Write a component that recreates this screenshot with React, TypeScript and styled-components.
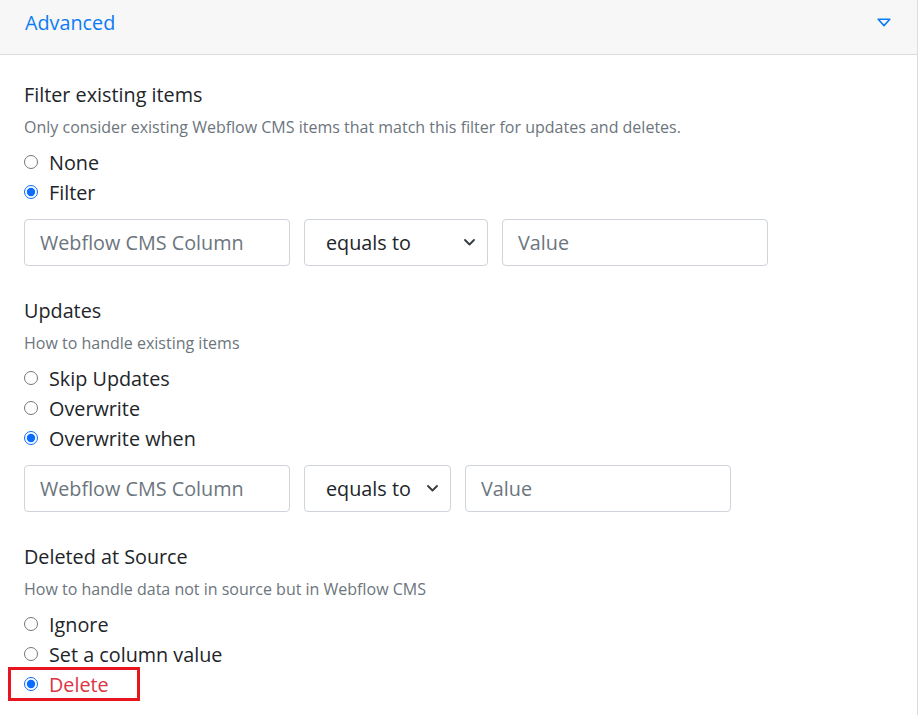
import { FunctionComponent } from 'react';
import { createGlobalStyle, styled } from 'styled-components';

const GlobalStyle = createGlobalStyle`
  body {
    margin: 0;
    background: #fff;
    font-family: 'Open Sans', 'Noto Sans', sans-serif;
    color: #212529;
  }
`;

interface Option {
  label: string;
  checked?: boolean;
  danger?: boolean;
  highlight?: boolean;
}

interface SectionProps {
  name: string;
  title: string;
  description: string;
  options: Option[];
  selectWidth?: number;
}

const Chevron = () => (
  <svg width="11" height="7" viewBox="0 0 11 7" fill="none">
    <path d="M1 1l4.5 4.5L10 1" stroke="#343a40" strokeWidth="1.8" strokeLinecap="round" strokeLinejoin="round" />
  </svg>
);

const Triangle = () => (
  <svg width="14" height="9" viewBox="0 0 14 9" fill="none">
    <path d="M1.2 1.2h11.6L7 7.6z" stroke="#0d7cf2" strokeWidth="1.6" strokeLinejoin="round" />
  </svg>
);

const Section: FunctionComponent<SectionProps> = ({ name, title, description, options, selectWidth }) => (
  <SectionBox>
    <SectionTitle>{title}</SectionTitle>
    <Description>{description}</Description>
    <RadioList>
      {options.map((option) => (
        <RadioRow key={option.label} $highlight={option.highlight}>
          <Radio type="radio" name={name} defaultChecked={option.checked} />
          <RadioLabel $danger={option.danger}>{option.label}</RadioLabel>
        </RadioRow>
      ))}
    </RadioList>
    {selectWidth && (
      <FilterRow>
        <TextInput placeholder="Webflow CMS Column" />
        <SelectWrap $width={selectWidth}>
          <Select defaultValue="equals">
            <option value="equals">equals to</option>
          </Select>
          <SelectIcon>
            <Chevron />
          </SelectIcon>
        </SelectWrap>
        <TextInput placeholder="Value" />
      </FilterRow>
    )}
  </SectionBox>
);

const App = () => (
  <>
    <GlobalStyle />
    <Panel>
      <Header>
        <HeaderTitle>Advanced</HeaderTitle>
        <Triangle />
      </Header>
      <Body>
        <Section
          name="filter"
          title="Filter existing items"
          description="Only consider existing Webflow CMS items that match this filter for updates and deletes."
          options={[{ label: 'None' }, { label: 'Filter', checked: true }]}
          selectWidth={184}
        />
        <Section
          name="updates"
          title="Updates"
          description="How to handle existing items"
          options={[
            { label: 'Skip Updates' },
            { label: 'Overwrite' },
            { label: 'Overwrite when', checked: true },
          ]}
          selectWidth={147}
        />
        <Section
          name="deleted"
          title="Deleted at Source"
          description="How to handle data not in source but in Webflow CMS"
          options={[
            { label: 'Ignore' },
            { label: 'Set a column value' },
            { label: 'Delete', checked: true, danger: true, highlight: true },
          ]}
        />
      </Body>
    </Panel>
  </>
);

const Panel = styled.div`
  width: 918px;
  min-height: 715px;
  border-right: 1px solid #dcdcdc;
  box-sizing: border-box;
`;

const Header = styled.div`
  height: 55px;
  box-sizing: border-box;
  padding: 9px 26px 0 25px;
  background: #f7f7f7;
  border-bottom: 1px solid #dcdcdc;
  display: flex;
  justify-content: space-between;
  align-items: flex-start;

  svg {
    margin-top: 9px;
  }
`;

const HeaderTitle = styled.div`
  font-size: 19.8px;
  line-height: 27px;
  color: #0d7cf2;
`;

const Body = styled.div`
  padding: 26px 24px 0 24px;
  display: flex;
  flex-direction: column;
  gap: 31px;
`;

const SectionBox = styled.div`
  display: flex;
  flex-direction: column;
`;

const SectionTitle = styled.div`
  font-size: 19.8px;
  line-height: 27px;
  margin-bottom: 8px;
`;

const Description = styled.div`
  font-size: 16px;
  line-height: 22px;
  color: #6c757d;
  margin-bottom: 9px;
`;

const RadioList = styled.div`
  display: flex;
  flex-direction: column;
`;

const RadioRow = styled.label<{ $highlight?: boolean }>`
  position: relative;
  display: flex;
  align-items: center;
  gap: 11px;
  height: 30px;
  align-self: flex-start;

  ${({ $highlight }) =>
    $highlight &&
    `
    &::after {
      content: '';
      position: absolute;
      left: -16px;
      top: -2px;
      width: 132px;
      height: 34px;
      box-sizing: border-box;
      border: 3px solid #e8151f;
      pointer-events: none;
    }
  `}
`;

const Radio = styled.input`
  margin: 0;
  width: 14px;
  height: 14px;
  accent-color: #0a6cff;
`;

const RadioLabel = styled.span<{ $danger?: boolean }>`
  font-size: 19.8px;
  line-height: 27px;
  color: ${({ $danger }) => ($danger ? '#dc3545' : '#212529')};
`;

const FilterRow = styled.div`
  display: flex;
  gap: 14px;
  margin-top: 12px;
`;

const TextInput = styled.input`
  width: 266px;
  height: 47px;
  box-sizing: border-box;
  padding: 0 15px;
  border: 1px solid #ced4da;
  border-radius: 4px;
  font-family: 'Open Sans', 'Noto Sans', sans-serif;
  font-size: 19.8px;
  color: #495057;
  outline: none;

  &::placeholder {
    color: #6c757d;
  }
`;

const SelectWrap = styled.div<{ $width: number }>`
  position: relative;
  width: ${({ $width }) => $width}px;
`;

const Select = styled.select`
  appearance: none;
  width: 100%;
  height: 47px;
  box-sizing: border-box;
  padding: 0 30px 0 21px;
  border: 1px solid #ced4da;
  border-radius: 4px;
  background: #fff;
  font-family: 'Open Sans', 'Noto Sans', sans-serif;
  font-size: 19.8px;
  color: #212529;
  outline: none;
`;

const SelectIcon = styled.span`
  position: absolute;
  right: 13px;
  top: 20px;
  display: flex;
  pointer-events: none;
`;

export default App;
